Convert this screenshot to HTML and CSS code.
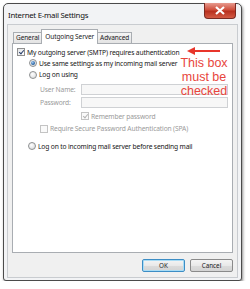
FILE: index.html
```html
<!DOCTYPE html>
<html>
<head>
	<title>Internet E-mail Settings</title>
	<link rel="stylesheet" href="styles.css">
</head>
<body>
	<div class="window">
		<div class="titlebar">
			<span class="title">Internet E-mail Settings</span>
			<span class="close"><svg width="12" height="9" viewBox="0 0 12 9"><path d="M2 1 L10 8 M10 1 L2 8" stroke="#fff" stroke-width="2.2"/></svg></span>
		</div>
		<div class="client">
			<div class="tabs">
				<span class="tab">General</span>
				<span class="tab active">Outgoing Server</span>
				<span class="tab">Advanced</span>
			</div>
			<div class="panel">
				<div class="row r1"><span class="check on"></span><span class="label">My outgoing server (SMTP) requires authentication</span></div>
				<div class="row r2"><span class="radio on"></span><span class="label">Use same settings as my incoming mail server</span></div>
				<div class="row r3"><span class="radio"></span><span class="label">Log on using</span></div>
				<div class="row field r4"><span class="label off name">User Name:</span><span class="input"></span></div>
				<div class="row field r5"><span class="label off name">Password:</span><span class="input"></span></div>
				<div class="row r6"><span class="check on off"></span><span class="label off">Remember password</span></div>
				<div class="row r7"><span class="check off"></span><span class="label off">Require Secure Password Authentication (SPA)</span></div>
				<div class="row r8"><span class="radio"></span><span class="label">Log on to incoming mail server before sending mail</span></div>
			</div>
			<div class="buttons">
				<span class="btn ok">OK</span>
				<span class="btn">Cancel</span>
			</div>
		</div>
		<!-- annotation drawn over the dialog -->
		<svg class="arrow" width="34" height="10" viewBox="0 0 34 10"><path d="M6 5 H33" stroke="#e8352b" stroke-width="2"/><path d="M0 5 L8 1 L8 9 Z" fill="#e8352b"/></svg>
		<div class="note">This box<br>must be<br>checked</div>
	</div>
</body>
</html>
```

FILE: styles.css
```css
body {
	margin: 0;
	background: #ffffff;
	font-family: "Noto Sans", "Open Sans", sans-serif;
}
.window {
	position: relative;
	margin: 3px 0 0 3px;
	width: 239px;
	height: 278px;
	box-sizing: border-box;
	border: 1px solid #4b4b4b;
	border-radius: 5px 5px 3px 3px;
	background: #f2f3f5;
	box-shadow: 1px 2px 3px rgba(0, 0, 0, 0.45);
	padding: 0 3px 3px 3px;
}
.titlebar {
	height: 20px;
	display: flex;
	align-items: flex-start;
	justify-content: space-between;
}
.title {
	font-size: 7.8px;
	color: #111;
	margin: 6px 0 0 1px;
	letter-spacing: -0.25px;
}
.close {
	width: 30px;
	height: 15px;
	margin: -1px 2px 0 0;
	border: 1px solid #7a2a22;
	border-top: none;
	border-radius: 0 0 4px 4px;
	background: linear-gradient(#e79a8e, #cf4f3c 45%, #b8301f 55%, #d35a44);
	display: flex;
	align-items: center;
	justify-content: center;
}
.client {
	height: 254px;
	background: #f0f0f0;
	border: 1px solid #c9ccd0;
	box-sizing: border-box;
	padding: 4px 4px 0 4px;
}
.tabs {
	height: 14px;
	display: flex;
	align-items: flex-end;
	padding-left: 1px;
	position: relative;
	z-index: 1;
}
.tab {
	height: 11px;
	box-sizing: border-box;
	border: 1px solid #a9adb2;
	border-bottom: none;
	background: linear-gradient(#f5f5f5, #e3e3e3);
	font-size: 6.5px;
	letter-spacing: -0.1px;
	color: #1a1a1a;
	padding: 0 2px;
	line-height: 10px;
	margin-right: -1px;
}
.tab.active {
	height: 15px;
	background: #ffffff;
	margin-bottom: -1px;
	line-height: 13px;
	padding: 0 3px;
	position: relative;
	z-index: 2;
}
.panel {
	height: 210px;
	box-sizing: border-box;
	background: #ffffff;
	border: 1px solid #a9adb2;
	padding-top: 2px;
}
.row {
	display: flex;
	align-items: center;
	height: 12px;
	font-size: 6.7px;
	letter-spacing: -0.15px;
	color: #161616;
}
.label {
	white-space: nowrap;
}
.label.off {
	color: #9a9a9a;
}
.r1 { padding-left: 4px; }
.r2 { padding-left: 16px; height: 10px; }
.r3 { padding-left: 16px; height: 13px; }
.r4 { margin-top: 2px; height: 13px; }
.r5 { height: 12px; }
.r6 { padding-left: 68px; height: 14px; margin-top: 1px; }
.r7 { padding-left: 27px; height: 11px; }
.r8 { padding-left: 15px; margin-top: 6px; }
.field {
	padding-left: 27px;
}
.name {
	width: 41px;
}
.input {
	width: 147px;
	height: 11px;
	box-sizing: border-box;
	border: 1px solid #cfd1d4;
	background: #f7f7f7;
}
.check {
	width: 8px;
	height: 8px;
	box-sizing: border-box;
	border: 1px solid #8f8f8f;
	background: linear-gradient(135deg, #e2e4e6, #ffffff);
	margin-right: 2px;
	position: relative;
}
.check.on::after {
	content: "";
	position: absolute;
	left: 1.5px;
	top: 0px;
	width: 2px;
	height: 4px;
	border: solid #2a3f6b;
	border-width: 0 1.5px 1.5px 0;
	transform: rotate(40deg);
}
.check.off {
	border-color: #c4c4c4;
	background: #fafafa;
}
.check.on.off::after {
	border-color: #b5b5b5;
}
.radio {
	width: 8px;
	height: 8px;
	box-sizing: border-box;
	border-radius: 50%;
	border: 1px solid #8e9091;
	background: radial-gradient(circle at 40% 35%, #ffffff, #d4d6d8);
	margin-right: 2px;
	position: relative;
}
.radio.on::after {
	content: "";
	position: absolute;
	left: 1px;
	top: 1px;
	width: 4px;
	height: 4px;
	border-radius: 50%;
	background: radial-gradient(circle at 40% 35%, #9fc7f0, #1f5c9c 70%);
}
.buttons {
	display: flex;
	justify-content: flex-end;
	gap: 5px;
	margin-top: 6px;
}
.btn {
	width: 43px;
	height: 13px;
	box-sizing: border-box;
	border: 1px solid #8a8a8a;
	border-radius: 2px;
	background: linear-gradient(#f4f4f4, #e9e9e9 50%, #dcdcdc 51%, #d4d4d4);
	font-size: 6.3px;
	color: #222;
	display: flex;
	align-items: center;
	justify-content: center;
}
.btn.ok {
	border-color: #3c8dc5;
	box-shadow: inset 0 0 0 1px #a9dcf5;
}
.arrow {
	position: absolute;
	left: 183px;
	top: 42px;
}
.note {
	position: absolute;
	left: 173px;
	top: 52px;
	width: 54px;
	text-align: center;
	font-family: "Liberation Sans", Arial, sans-serif;
	font-size: 12.5px;
	line-height: 14px;
	color: #e8453c;
}
```
